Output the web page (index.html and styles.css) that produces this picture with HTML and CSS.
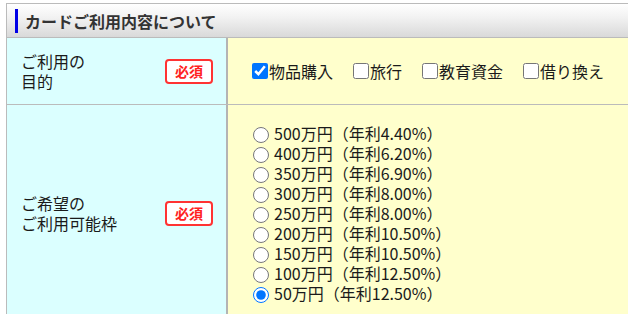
FILE: index.html
```
<!DOCTYPE html>
<html>
<head>
<meta http-equiv="Content-Type" content="text/html; charset=utf-8"/>
<title>カードご利用内容について</title>
<link rel="stylesheet" href="styles.css">
</head>
<body>
<div class="section">
  <h2 class="section-title">カードご利用内容について</h2>

  <div class="row">
    <div class="label-cell">
      <span class="label-text">ご利用の<br>目的</span>
      <span class="badge">必須</span>
    </div>
    <div class="input-cell">
      <div class="checks">
        <label><input type="checkbox" checked>物品購入</label>
        <label><input type="checkbox">旅行</label>
        <label><input type="checkbox">教育資金</label>
        <label><input type="checkbox">借り換え</label>
      </div>
    </div>
  </div>

  <div class="row">
    <div class="label-cell">
      <span class="label-text">ご希望の<br>ご利用可能枠</span>
      <span class="badge">必須</span>
    </div>
    <div class="input-cell">
      <ul class="radios">
        <li><label><input type="radio" name="limit">500万円（年利4.40%）</label></li>
        <li><label><input type="radio" name="limit">400万円（年利6.20%）</label></li>
        <li><label><input type="radio" name="limit">350万円（年利6.90%）</label></li>
        <li><label><input type="radio" name="limit">300万円（年利8.00%）</label></li>
        <li><label><input type="radio" name="limit">250万円（年利8.00%）</label></li>
        <li><label><input type="radio" name="limit">200万円（年利10.50%）</label></li>
        <li><label><input type="radio" name="limit">150万円（年利10.50%）</label></li>
        <li><label><input type="radio" name="limit">100万円（年利12.50%）</label></li>
        <li><label><input type="radio" name="limit" checked>50万円（年利12.50%）</label></li>
      </ul>
    </div>
  </div>
</div>
</body>
</html>
```

FILE: styles.css
```
html {
  overflow-x: hidden;
}

body {
  margin: 3px 0 0 6px;
  background-color: white;
  font-family: "Noto Sans CJK JP", "Noto Sans", sans-serif;
  font-size: 16px;
  line-height: 20px;
  color: #1a1a1a;
}

.section {
  width: 660px;
  border: 1px solid #bbb;
  border-bottom: none;
}

.section-title {
  display: flex;
  align-items: center;
  margin: 0;
  padding: 5px 0 5px 8px;
  height: 23px;
  font-size: 16px;
  font-weight: bold;
  color: #333;
  background: linear-gradient(#ffffff, #f2f2f2 40%, #d9d9d9);
  border-bottom: 1px solid #bbb;
}

.section-title::before {
  content: "";
  width: 3px;
  height: 24px;
  margin-right: 7px;
  background: #0000e6;
}

.row {
  display: flex;
  border-bottom: 1px solid #bbb;
}

.label-cell {
  width: 192px;
  flex: none;
  display: flex;
  align-items: center;
  justify-content: space-between;
  padding: 0 13px 0 14px;
  background: #dbffff;
  border-right: 2px solid #b4b4b4;
}

.badge {
  padding: 1px 8px;
  border: 2px solid #f33;
  border-radius: 4px;
  background: #fff;
  color: #f22;
  font-size: 14px;
  font-weight: bold;
  line-height: 19px;
}

.input-cell {
  flex: 1;
  background: #ffffcc;
  padding: 0 0 0 21px;
}

.checks {
  display: flex;
  gap: 17px;
  height: 66px;
  align-items: center;
}

.checks label {
  display: flex;
  align-items: center;
}

.checks input {
  width: 16px;
  height: 16px;
  margin: 0 1px 0 3px;
}

.radios {
  list-style: none;
  margin: 0;
  padding: 18px 0;
}

.radios input {
  width: 16px;
  height: 16px;
  margin: 0 5px 0 4px;
  vertical-align: -3px;
}
```
